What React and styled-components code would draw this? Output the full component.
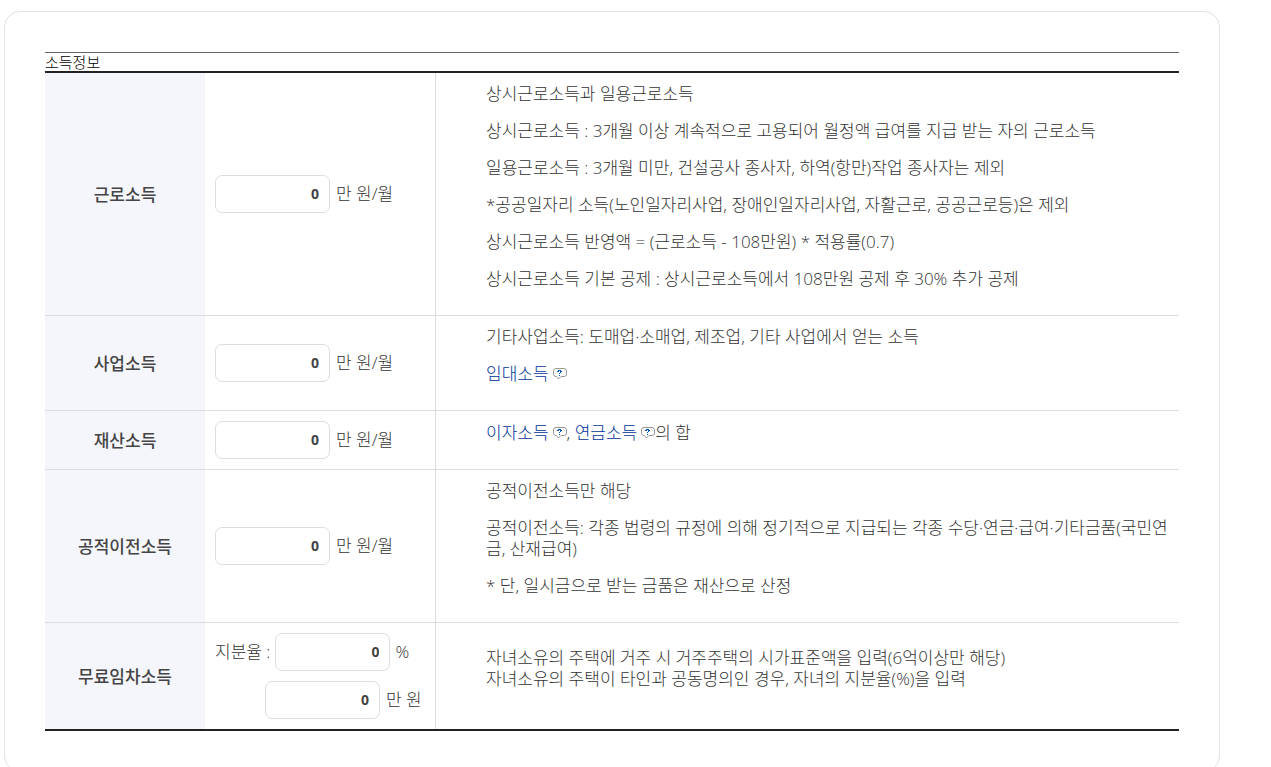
import React from "react";
import styled, { createGlobalStyle } from "styled-components";

const GlobalStyle = createGlobalStyle`
  *, *::before, *::after { box-sizing: border-box; }
  body {
    margin: 0;
    background: #fff;
    color: #333;
    font-family: "Open Sans", "Noto Sans CJK KR", sans-serif;
    font-size: 17px;
    font-weight: 300;
    line-height: 21px;
  }
`;

const Page = styled.main`
  padding: 11px 51px 0 4px;
`;

const Card = styled.section`
  padding: 40px;
  border: 1px solid #e2e2e2;
  border-radius: 16px;
`;

const Table = styled.table`
  width: 100%;
  table-layout: fixed;
  border-spacing: 0;
  border-bottom: 2px solid #222;
`;

const Caption = styled.caption`
  height: 21px;
  border-top: 1px solid #666;
  border-bottom: 2px solid #222;
  color: #000;
  font-size: 15px;
  line-height: 18px;
  text-align: left;
`;

const LabelCol = styled.col`
  width: 160px;
`;

const EntryCol = styled.col`
  width: 231px;
`;

const Row = styled.tr`
  & + & > * {
    border-top: 1px solid #ddd;
  }
`;

const HeadCell = styled.th`
  padding: 10px;
  background: #f5f6fc;
  color: #444;
  font-weight: 500;
`;

const EntryCell = styled.td`
  padding: 10px;
  border-right: 1px solid #ddd;
`;

const NoteCell = styled.td`
  padding: 10px 10px 10px 50px;
`;

const Note = styled.p`
  margin: 0 0 16px;
  word-break: break-all;
`;

const Field = styled.label`
  display: flex;
  align-items: center;
  gap: ${(p) => (p.$tight ? "5px" : "6px")};
  padding-left: ${(p) => (p.$indent ? "50px" : "0")};

  & + & {
    margin-top: 10px;
  }
`;

const FieldText = styled.span`
  padding-bottom: 2px;
`;

const Amount = styled.input`
  width: 115px;
  height: 38px;
  padding: 0 10px 2px;
  border: 1px solid #ddd;
  border-radius: 7px;
  background: #fff;
  color: #444;
  font-family: "Open Sans", "Noto Sans", sans-serif;
  font-size: 14px;
  font-weight: 700;
  text-align: right;
`;

const TermLink = styled.a`
  color: #003399;
  text-decoration: none;
`;

const Bubble = styled.svg`
  width: 14px;
  height: 12px;
  margin-left: 4px;
`;

function Term({ children }) {
  return (
    <TermLink href="#">
      {children}
      <Bubble viewBox="0 0 14 12" fill="none" aria-hidden="true">
        <path
          d="M3 .5h8a2.500 2.500 0 0 1 2.500 2.500v3A2.500 2.500 0 0 1 11 8.500H8L5.500 11 3.500 8.500H3A2.500 2.500 0 0 1 .5 6V3A2.500 2.500 0 0 1 3 .5z"
          stroke="#999"
        />
        <path
          d="M5 2h3v1H5zM4 3h2v1H4zM7 3h2v1H7zM7 4h1v1H7zM6 5h1v1H6zM6 7h1v1H6z"
          fill="#0058c8"
          shapeRendering="crispEdges"
        />
      </Bubble>
    </TermLink>
  );
}

function Entry({ name, unit = "만 원/월", before, indent }) {
  return (
    <Field $indent={indent} $tight={Boolean(before)}>
      {before && <FieldText>{before}</FieldText>}
      <Amount type="text" inputMode="numeric" aria-label={name} defaultValue="0" />
      <FieldText>{unit}</FieldText>
    </Field>
  );
}

function IncomeRow({ title, entries, children }) {
  return (
    <Row>
      <HeadCell scope="row">{title}</HeadCell>
      <EntryCell>{entries || <Entry name={title} />}</EntryCell>
      <NoteCell>{children}</NoteCell>
    </Row>
  );
}

export default function App() {
  return (
    <Page>
      <GlobalStyle />
      <Card>
        <Table>
          <Caption>소득정보</Caption>
          <colgroup>
            <LabelCol />
            <EntryCol />
            <col />
          </colgroup>
          <tbody>
            <IncomeRow title="근로소득">
              <Note>상시근로소득과 일용근로소득</Note>
              <Note>상시근로소득 : 3개월 이상 계속적으로 고용되어 월정액 급여를 지급 받는 자의 근로소득</Note>
              <Note>일용근로소득 : 3개월 미만, 건설공사 종사자, 하역(항만)작업 종사자는 제외</Note>
              <Note>*공공일자리 소득(노인일자리사업, 장애인일자리사업, 자활근로, 공공근로등)은 제외</Note>
              <Note>상시근로소득 반영액 = (근로소득 - 108만원) * 적용률(0.7)</Note>
              <Note>상시근로소득 기본 공제 : 상시근로소득에서 108만원 공제 후 30% 추가 공제</Note>
            </IncomeRow>
            <IncomeRow title="사업소득">
              <Note>기타사업소득: 도매업·소매업, 제조업, 기타 사업에서 얻는 소득</Note>
              <Note><Term>임대소득</Term></Note>
            </IncomeRow>
            <IncomeRow title="재산소득">
              <Note><Term>이자소득</Term>, <Term>연금소득</Term>의 합</Note>
            </IncomeRow>
            <IncomeRow title="공적이전소득">
              <Note>공적이전소득만 해당</Note>
              <Note>공적이전소득: 각종 법령의 규정에 의해 정기적으로 지급되는 각종 수당·연금·급여·기타금품(국민연금, 산재급여)</Note>
              <Note>* 단, 일시금으로 받는 금품은 재산으로 산정</Note>
            </IncomeRow>
            <IncomeRow
              title="무료임차소득"
              entries={
                <>
                  <Entry name="지분율" before="지분율 :" unit="%" />
                  <Entry name="무료임차소득" unit="만 원" indent />
                </>
              }
            >
              <Note>
                자녀소유의 주택에 거주 시 거주주택의 시가표준액을 입력(6억이상만 해당)
                <br />
                자녀소유의 주택이 타인과 공동명의인 경우, 자녀의 지분율(%)을 입력
              </Note>
            </IncomeRow>
          </tbody>
        </Table>
      </Card>
    </Page>
  );
}
